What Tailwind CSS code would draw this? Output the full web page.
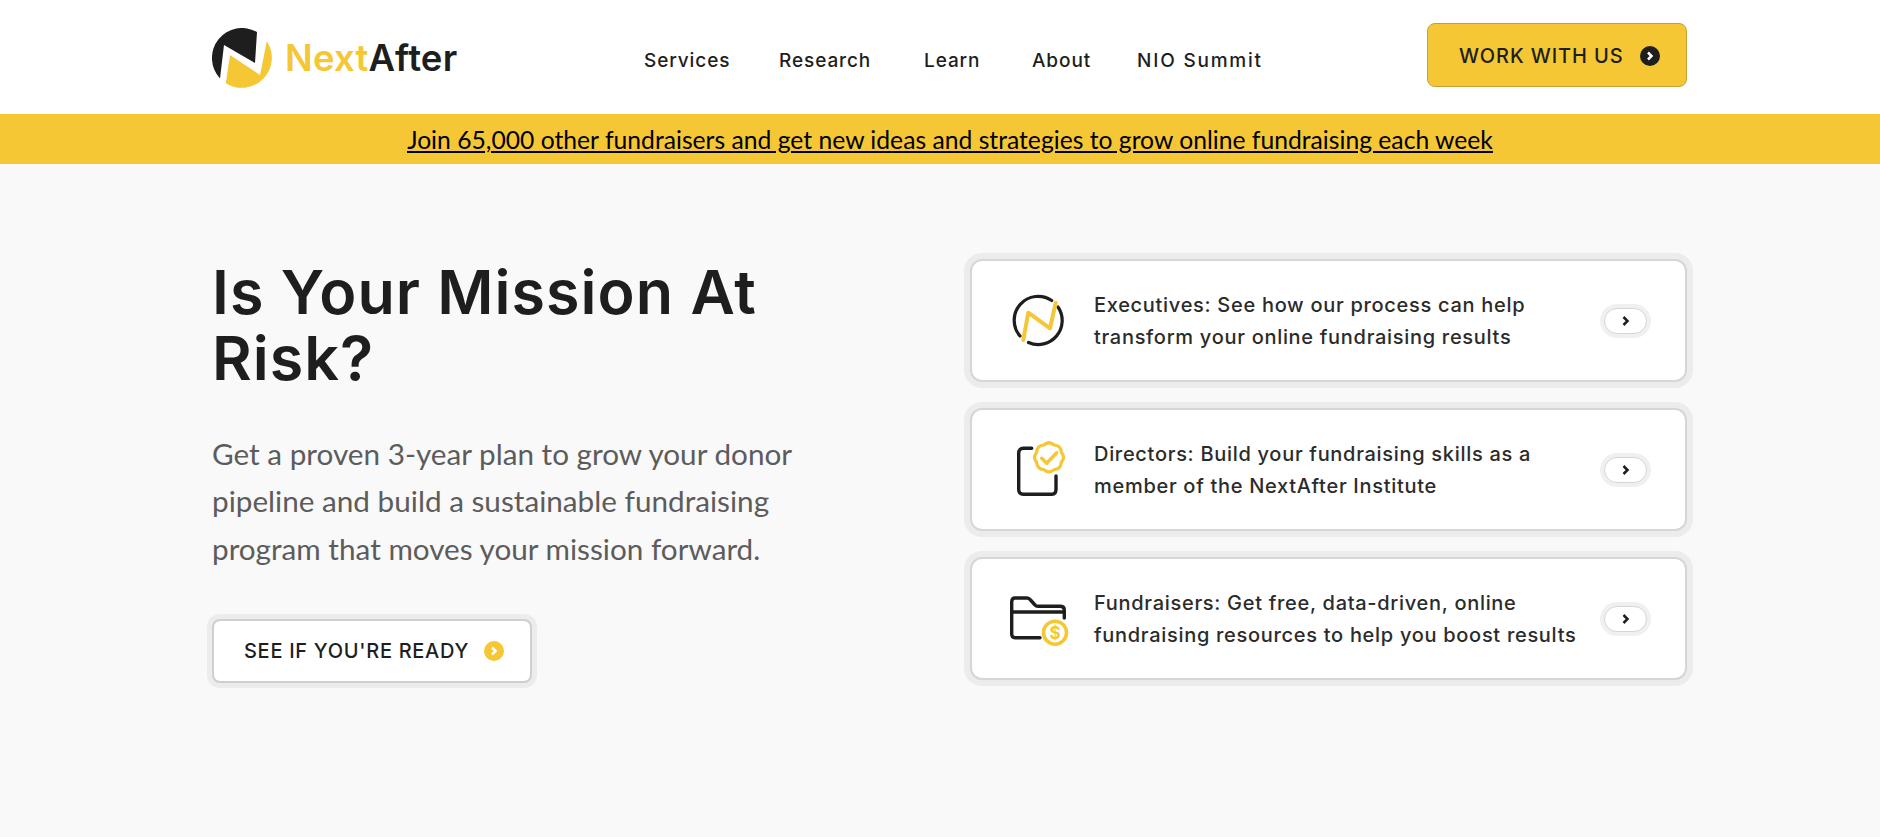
<!DOCTYPE html>
<html lang="en">
  <head>
    <meta charset="UTF-8" />
    <meta name="viewport" content="width=device-width, initial-scale=1.0" />
    <title>NextAfter</title>
    <script src="https://cdn.jsdelivr.net/npm/@tailwindcss/browser@4"></script>
  </head>
  <body class="bg-[#f9f9f9] min-h-screen font-['Inter',sans-serif] text-[#1e1e1e]">
    <!-- header -->
    <header class="bg-white h-[114px]">
      <div class="w-[1475px] ml-[212px] h-full flex items-center">
        <a class="flex items-center w-[340px] shrink-0 mt-[2px]">
          <svg width="60" height="60" viewBox="0 0 60 60">
            <path d="M45 4A30 30 0 0 0 8 50.400L12 17 43 35Z" fill="#1e1e1e" />
            <path d="M54.800 13.200A30 30 0 0 1 13.800 55.200L18 27 48 47Z" fill="#f5c735" />
          </svg>
          <span class="ml-[13px] text-[36.5px] font-semibold tracking-[0.2px] leading-none text-[#f5c735]">Next<span class="text-[#1e1e1e]">After</span></span>
        </a>
        <nav class="flex items-center text-[19px] font-medium tracking-[0.9px] mt-[8px] ml-[92px]">
          <a class="w-[135px]">Services</a>
          <a class="w-[145px]">Research</a>
          <a class="w-[108px]">Learn</a>
          <a class="w-[105px]">About</a>
          <a class="tracking-[1.8px]">NIO Summit</a>
        </nav>
        <a class="ml-auto w-[260px] h-[64px] -mt-[4px] pl-[31px] pt-[2px] flex items-center gap-[16px] bg-[#f5c735] border border-[#c5a03a] rounded-[8px] text-[20px] font-medium tracking-[0.9px]">
          WORK WITH US
          <svg width="20" height="20" viewBox="0 0 20 20"><circle cx="10" cy="10" r="10" fill="#1e1e1e" /><path d="M8 6.500 11.500 10 8 13.500" fill="none" stroke="#fff" stroke-width="2.500" /></svg>
        </a>
      </div>
    </header>

    <!-- banner -->
    <div class="bg-[#f5c735] h-[50px] flex items-center justify-center pl-[20px] font-['Lato',sans-serif] text-[24.7px] text-black underline">
      <a class="mt-[1px]">Join 65,000 other fundraisers and get new ideas and strategies to grow online fundraising each week</a>
    </div>

    <!-- hero -->
    <main class="w-[1475px] ml-[212px] flex justify-between pt-[95px]">
      <section class="w-[600px]">
        <h1 class="w-[560px] text-[61px] font-semibold tracking-[1px] leading-[66px]">Is Your Mission At Risk?</h1>
        <p class="mt-[39px] font-['Lato',sans-serif] text-[29.7px] leading-[47.4px] text-[#5c5c5c] w-[590px]">Get a proven 3-year plan to grow your donor pipeline and build a sustainable fundraising program that moves your mission forward.</p>
        <a class="mt-[47px] w-[320px] h-[64px] pl-[30px] flex items-center gap-[15px] bg-white border-2 border-[#cfcfcf] rounded-[8px] ring-[5px] ring-[#ececec] text-[20px] font-medium tracking-[0.7px]">
          SEE IF YOU'RE READY
          <svg width="20" height="20" viewBox="0 0 20 20"><circle cx="10" cy="10" r="10" fill="#f5c735" /><path d="M8 6.500 11.500 10 8 13.500" fill="none" stroke="#fff" stroke-width="2.500" /></svg>
        </a>
      </section>

      <section class="w-[717px] flex flex-col gap-[26px]">
        <a class="h-[123px] flex items-center bg-white border-2 border-[#d6d6d6] rounded-[12px] ring-[6px] ring-[#ececec]">
          <div class="w-[122px] pl-[40px] shrink-0">
            <svg width="54" height="54" viewBox="0 0 54 54">
              <path d="M8 42A24 24 0 0 1 39.700 6.500M16.500 48.500A24 24 0 0 0 46 13" fill="none" stroke="#1e1e1e" stroke-width="3.200" stroke-linecap="round" />
              <path d="M11.300 46 16.300 18.700 38 34.300 43.700 8.700" fill="none" stroke="#f5c735" stroke-width="4" stroke-linecap="round" stroke-linejoin="round" />
            </svg>
          </div>
          <p class="flex-1 text-[20px] font-medium tracking-[0.7px] leading-[32px] text-[#2b2b2b]">Executives: See how our process can help<br />transform your online fundraising results</p>
          <span class="w-[43px] h-[26px] mr-[38px] flex items-center justify-center rounded-full bg-white border border-[#d6d6d6] ring-[4px] ring-[#f0f0f0]">
            <svg width="10" height="12" viewBox="0 0 10 12"><path d="M2.500 2 6.500 6 2.500 10" fill="none" stroke="#1e1e1e" stroke-width="2.500" /></svg>
          </span>
        </a>
        <a class="h-[123px] flex items-center bg-white border-2 border-[#d6d6d6] rounded-[12px] ring-[6px] ring-[#ececec]">
          <div class="w-[122px] pl-[43px] mb-[4px] shrink-0">
            <svg width="54" height="56" viewBox="0 0 54 56">
              <path d="M16.700 8.300H8.300Q3.700 8.300 3.700 13.300V49.300Q3.700 54.300 8.300 54.300H37Q41 54.300 41 49.300V36" fill="none" stroke="#1e1e1e" stroke-width="3.400" stroke-linecap="round" />
              <g transform="translate(34 17.300)" fill="none" stroke="#f5c735" stroke-width="3.200" stroke-linecap="round" stroke-linejoin="round">
                <path d="M12.300-5.100Q16.800 0 12.300 5.100 11.900 11.900 5.100 12.300 0 16.800-5.100 12.300-11.900 11.900-12.300 5.100-16.800 0-12.300-5.100-11.900-11.900-5.100-12.300 0-16.800 5.100-12.300 11.900-11.900 12.300-5.100Z" />
                <path d="M-7.300 1-2.300 6 7.700-4.600" stroke-width="3.500" />
              </g>
            </svg>
          </div>
          <p class="flex-1 text-[20px] font-medium tracking-[0.7px] leading-[32px] text-[#2b2b2b]">Directors: Build your fundraising skills as a<br />member of the NextAfter Institute</p>
          <span class="w-[43px] h-[26px] mr-[38px] flex items-center justify-center rounded-full bg-white border border-[#d6d6d6] ring-[4px] ring-[#f0f0f0]">
            <svg width="10" height="12" viewBox="0 0 10 12"><path d="M2.500 2 6.500 6 2.500 10" fill="none" stroke="#1e1e1e" stroke-width="2.500" /></svg>
          </span>
        </a>
        <a class="h-[123px] flex items-center bg-white border-2 border-[#d6d6d6] rounded-[12px] ring-[6px] ring-[#ececec]">
          <div class="w-[122px] pl-[38px] mt-[4px] shrink-0">
            <svg width="60" height="50" viewBox="0 0 60 50">
              <path d="M30 41.700H5Q1.700 41.700 1.700 38V6Q1.700 2 5 2H17Q19 2 20.500 4L25 9Q26 10.300 28 10.300H50Q54.300 10.300 54.300 14V22M1.700 16H54" fill="none" stroke="#1e1e1e" stroke-width="3.400" stroke-linecap="round" stroke-linejoin="round" />
              <circle cx="45" cy="36.700" r="11.500" fill="#fff" stroke="#f5c735" stroke-width="3.500" />
              <text x="45" y="43" text-anchor="middle" font-size="17" font-weight="700" fill="#f5c735" font-family="Inter">$</text>
            </svg>
          </div>
          <p class="flex-1 text-[20px] font-medium tracking-[0.7px] leading-[32px] text-[#2b2b2b]">Fundraisers: Get free, data-driven, online<br />fundraising resources to help you boost results</p>
          <span class="w-[43px] h-[26px] mr-[38px] flex items-center justify-center rounded-full bg-white border border-[#d6d6d6] ring-[4px] ring-[#f0f0f0]">
            <svg width="10" height="12" viewBox="0 0 10 12"><path d="M2.500 2 6.500 6 2.500 10" fill="none" stroke="#1e1e1e" stroke-width="2.500" /></svg>
          </span>
        </a>
      </section>
    </main>
  </body>
</html>
